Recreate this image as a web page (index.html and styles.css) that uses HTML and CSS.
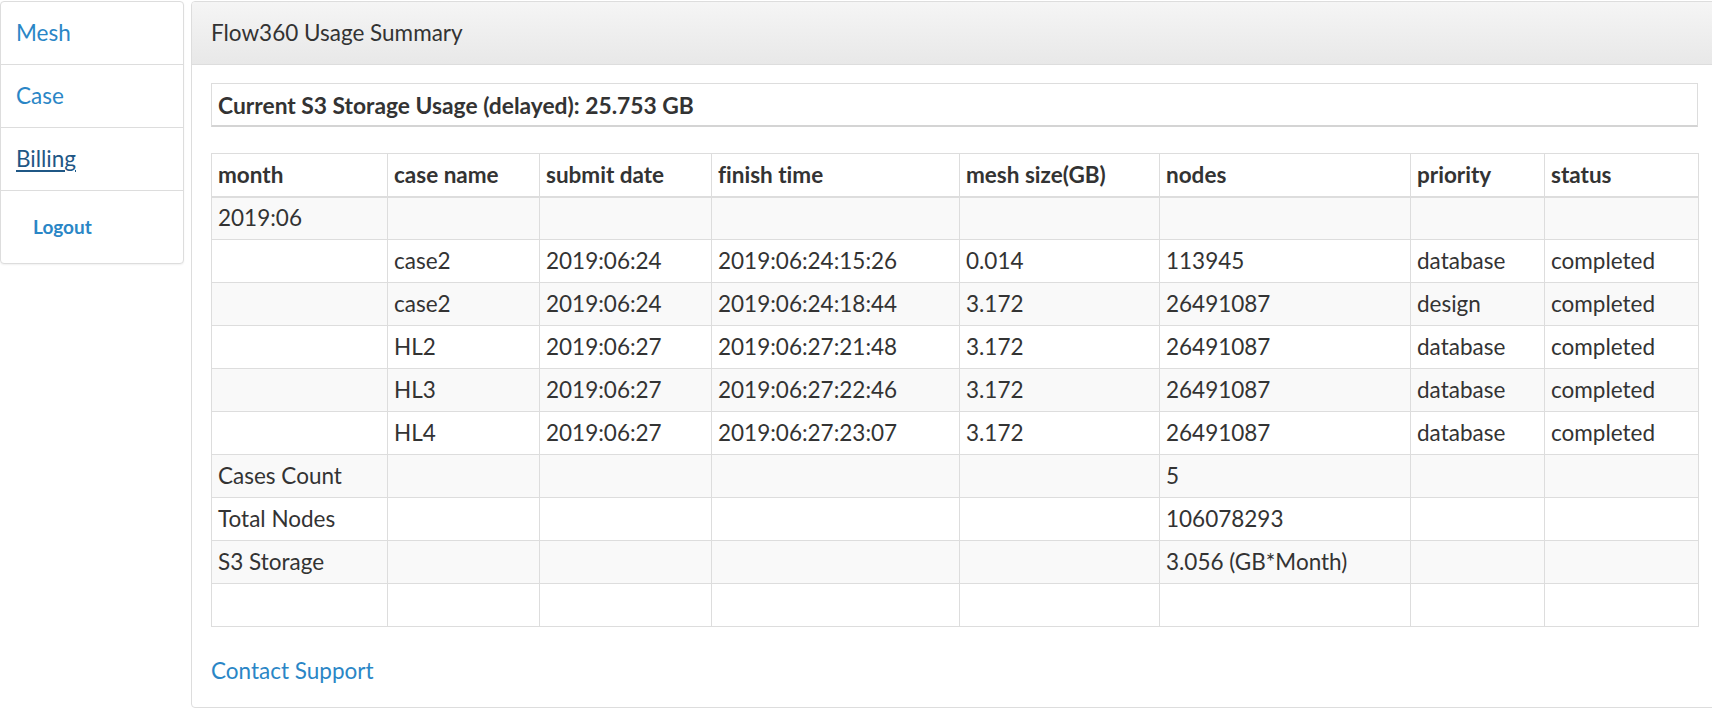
FILE: index.html
```html
<!DOCTYPE html>
<html>
<head>
<meta charset="utf-8">
<title>Flow360 Usage Summary</title>
<link rel="stylesheet" href="styles.css">
</head>
<body>
<div class="layout">
  <nav class="sidebar">
    <a class="side-item" href="#">Mesh</a>
    <a class="side-item" href="#">Case</a>
    <a class="side-item active" href="#">Billing</a>
    <a class="side-item logout" href="#">Logout</a>
  </nav>
  <section class="panel">
    <div class="panel-heading">Flow360 Usage Summary</div>
    <div class="panel-body">
      <div class="storage">Current S3 Storage Usage (delayed): 25.753 GB</div>
      <table class="usage">
        <colgroup>
          <col class="c1"><col class="c2"><col class="c3"><col class="c4"><col class="c5"><col class="c6"><col class="c7"><col class="c8">
        </colgroup>
        <thead>
          <tr><th>month</th><th>case name</th><th>submit date</th><th>finish time</th><th>mesh size(GB)</th><th>nodes</th><th>priority</th><th>status</th></tr>
        </thead>
        <tbody>
          <tr><td>2019:06</td><td></td><td></td><td></td><td></td><td></td><td></td><td></td></tr>
          <tr><td></td><td>case2</td><td>2019:06:24</td><td>2019:06:24:15:26</td><td>0.014</td><td>113945</td><td>database</td><td>completed</td></tr>
          <tr><td></td><td>case2</td><td>2019:06:24</td><td>2019:06:24:18:44</td><td>3.172</td><td>26491087</td><td>design</td><td>completed</td></tr>
          <tr><td></td><td>HL2</td><td>2019:06:27</td><td>2019:06:27:21:48</td><td>3.172</td><td>26491087</td><td>database</td><td>completed</td></tr>
          <tr><td></td><td>HL3</td><td>2019:06:27</td><td>2019:06:27:22:46</td><td>3.172</td><td>26491087</td><td>database</td><td>completed</td></tr>
          <tr><td></td><td>HL4</td><td>2019:06:27</td><td>2019:06:27:23:07</td><td>3.172</td><td>26491087</td><td>database</td><td>completed</td></tr>
          <tr><td>Cases Count</td><td></td><td></td><td></td><td></td><td>5</td><td></td><td></td></tr>
          <tr><td>Total Nodes</td><td></td><td></td><td></td><td></td><td>106078293</td><td></td><td></td></tr>
          <tr><td>S3 Storage</td><td></td><td></td><td></td><td></td><td>3.056 (GB*Month)</td><td></td><td></td></tr>
          <tr><td></td><td></td><td></td><td></td><td></td><td></td><td></td><td></td></tr>
        </tbody>
      </table>
      <a class="support" href="#">Contact Support</a>
    </div>
  </section>
</div>
</body>
</html>
```
FILE: styles.css
```css
html, body {
  margin: 0;
  padding: 0;
  overflow: hidden;
  background: #fff;
}
body {
  font-family: Lato, "Open Sans", sans-serif;
  font-size: 22.5px;
  color: #333;
  font-variant-ligatures: none;
}
.layout {
  display: flex;
  align-items: flex-start;
  gap: 7px;
  padding-top: 1px;
  width: 1740px;
}
.sidebar {
  flex: 0 0 184px;
  box-sizing: border-box;
  display: flex;
  flex-direction: column;
  border: 1px solid #ddd;
  border-radius: 4px;
  box-shadow: 0 1px 2px rgba(0,0,0,0.06);
  background: #fff;
}
.side-item {
  display: flex;
  align-items: center;
  box-sizing: border-box;
  height: 63px;
  padding-left: 15px;
  padding-bottom: 1px;
  border-bottom: 1px solid #ddd;
  color: #2a86c6;
  text-decoration: none;
}
.side-item.active {
  color: #1f5785;
  text-decoration: underline;
  text-underline-offset: 3px;
}
.side-item.logout {
  height: 72px;
  border-bottom: none;
  padding-left: 32px;
  font-weight: bold;
  font-size: 19px;
}
.panel {
  flex: 0 0 1527px;
  box-sizing: border-box;
  border: 1px solid #ddd;
  border-radius: 4px;
  background: #fff;
}
.panel-heading {
  height: 63px;
  box-sizing: border-box;
  display: flex;
  align-items: center;
  padding-left: 19px;
  padding-bottom: 2px;
  border-bottom: 1px solid #ddd;
  background: linear-gradient(#f5f5f5, #e8e8e8);
  border-radius: 3px 3px 0 0;
}
.panel-body {
  padding: 18px 19px 0 19px;
  height: 642px;
  box-sizing: border-box;
}
.storage {
  box-sizing: border-box;
  width: 1487px;
  height: 44px;
  border: 1px solid #ddd;
  border-bottom: 2px solid #d4d4d4;
  padding-left: 6px;
  display: flex;
  align-items: center;
  font-weight: bold;
  font-size: 22.8px;
}
.usage {
  margin-top: 26px;
  width: 1487px;
  border-collapse: collapse;
  table-layout: fixed;
  border: 1px solid #ddd;
}
.c1 { width: 176px; }
.c2 { width: 152px; }
.c3 { width: 172px; }
.c4 { width: 248px; }
.c5 { width: 200px; }
.c6 { width: 251px; }
.c7 { width: 134px; }
.c8 { width: 154px; }
.usage th, .usage td {
  border: 1px solid #ddd;
  height: 43px;
  padding: 0 6px;
  text-align: left;
  vertical-align: middle;
  box-sizing: border-box;
  white-space: nowrap;
  line-height: 1;
}
.usage th {
  font-weight: bold;
  border-bottom: 2px solid #ddd;
}
.usage tbody tr:nth-child(odd) td {
  background: #f9f9f9;
}
.support {
  display: block;
  margin-top: 30px;
  color: #2a86c6;
  text-decoration: none;
}
```
